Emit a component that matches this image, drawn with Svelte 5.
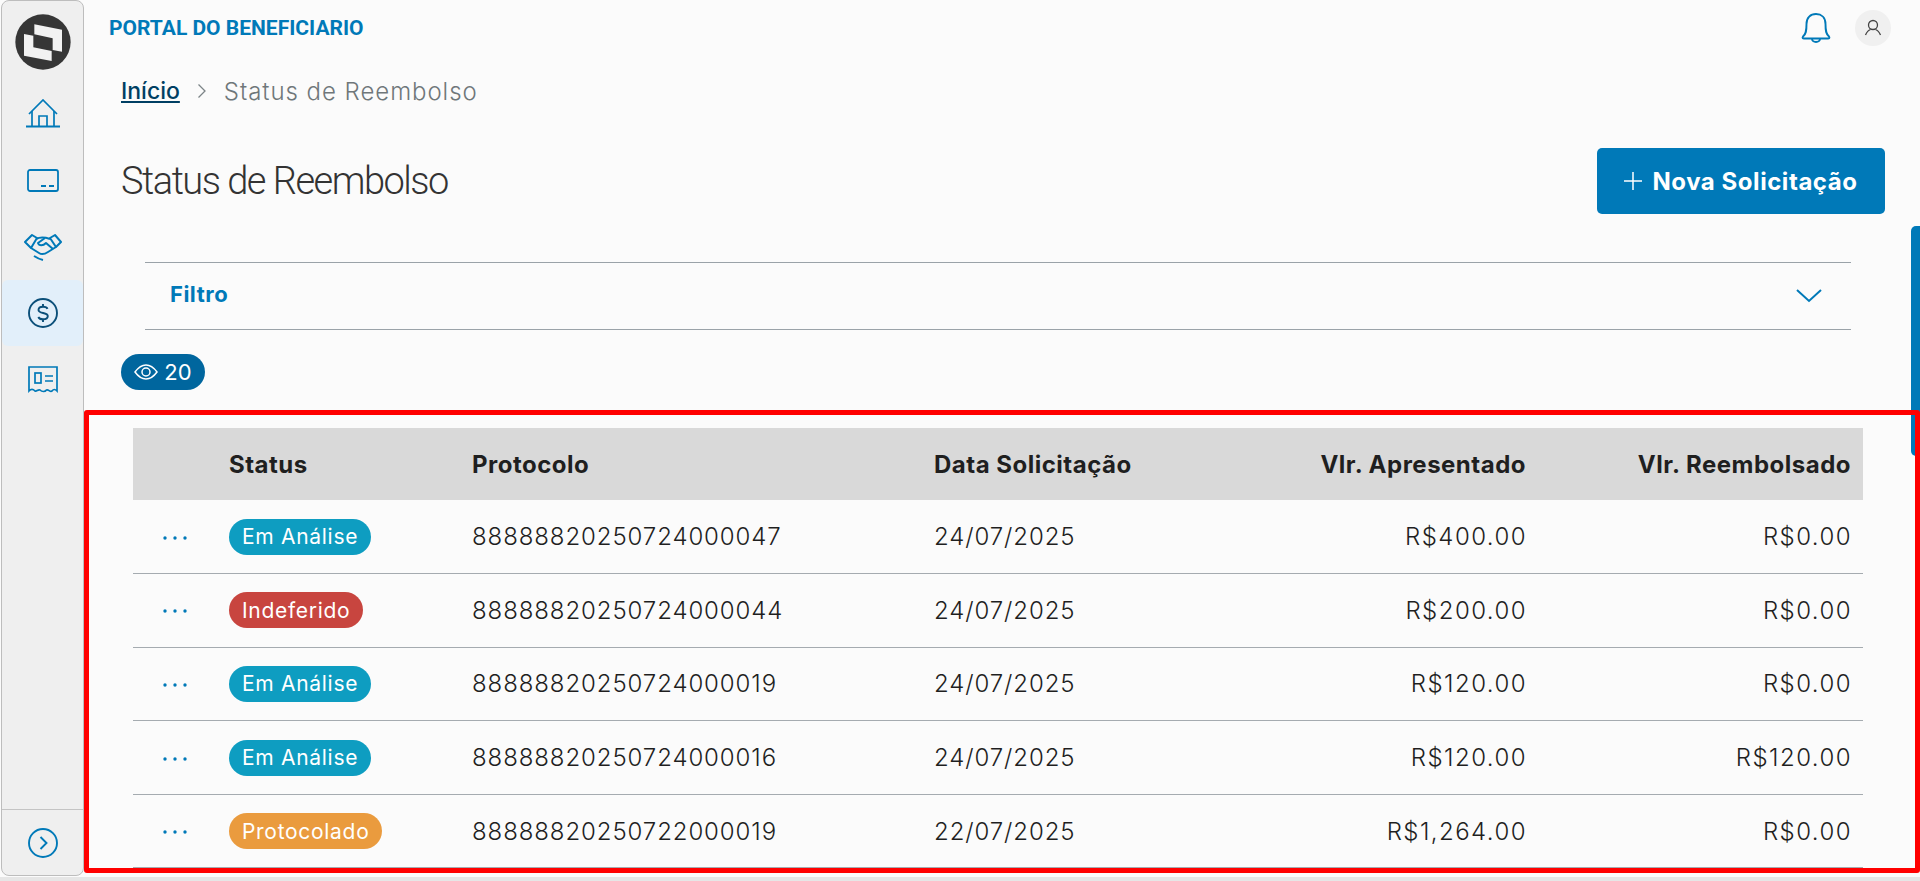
<script>
  const rows = [
    { status: 'Em Análise', kind: 'analise', protocolo: '88888820250724000047', data: '24/07/2025', apresentado: 'R$400.00', reembolsado: 'R$0.00' },
    { status: 'Indeferido', kind: 'indeferido', protocolo: '88888820250724000044', data: '24/07/2025', apresentado: 'R$200.00', reembolsado: 'R$0.00' },
    { status: 'Em Análise', kind: 'analise', protocolo: '88888820250724000019', data: '24/07/2025', apresentado: 'R$120.00', reembolsado: 'R$0.00' },
    { status: 'Em Análise', kind: 'analise', protocolo: '88888820250724000016', data: '24/07/2025', apresentado: 'R$120.00', reembolsado: 'R$120.00' },
    { status: 'Protocolado', kind: 'protocolado', protocolo: '88888820250722000019', data: '22/07/2025', apresentado: 'R$1,264.00', reembolsado: 'R$0.00' }
  ];
</script>

<div class="page">
  <aside class="sidebar">
    <div class="logo">
      <svg width="58" height="58" viewBox="0 0 174 174">
        <circle cx="87" cy="87" r="83" fill="#363636" />
        <path d="M61 34 L144 50 L144 116 L116 111 L116 76 L61 64 Z" fill="#f2f2f2" />
        <path d="M30 63 L58 68 L58 103 L113 114 L113 144 L30 128 Z" fill="#f2f2f2" />
      </svg>
    </div>
    <nav class="nav">
      <div class="nav-item">
        <svg width="36" height="32" viewBox="0 2 36 32" fill="none" stroke="#0079b8" stroke-width="1.7">
          <path d="M4 17 L18 3 L32 17" />
          <path d="M7 14 V29 M29 14 V29" />
          <path d="M14 29 V19 H22 V29" />
          <path d="M1 29.5 H35" stroke-width="2" />
        </svg>
      </div>
      <div class="nav-item">
        <svg width="34" height="26" viewBox="0 0 34 26" fill="none" stroke="#0079b8" stroke-width="1.8">
          <rect x="2" y="2" width="30" height="21" rx="2" />
          <path d="M15 18 H20 M23 18 H28" />
        </svg>
      </div>
      <div class="nav-item">
        <svg width="38" height="28" viewBox="0 0 38 28" fill="none" stroke="#0079b8" stroke-width="2" stroke-linejoin="round">
          <path d="M1 9 L8 2 L13 5 L7 15 Z" />
          <path d="M37 9 L31 2 L26 5 L32 14 Z" />
          <path d="M12 6 C16 4 20 4 26 6" />
          <path d="M7 15 L15 20 C18 22 21 21 24 19 L32 14" />
          <path d="M21 5 L14 10 C15 13 19 13 22 10 L29 16" />
          <path d="M10 23 C13 25 15 26 19 27" />
        </svg>
      </div>
      <div class="nav-item active">
        <svg width="32" height="32" viewBox="0 0 32 32" fill="none" stroke="#0b4f79" stroke-width="1.9">
          <circle cx="16" cy="16" r="14" />
          <path d="M20.500 11.800 C20 10.500 18 9.700 16 9.700 C13 9.700 11.500 11 11.500 13 C11.500 17 20.800 15 20.800 19 C20.800 21 19 22.300 16 22.300 C14 22.300 12 21.500 11.300 20" />
          <path d="M16 7 V9.700 M16 22.300 V25" />
        </svg>
      </div>
      <div class="nav-item">
        <svg width="32" height="28" viewBox="0 0 32 28" fill="none" stroke="#0079b8" stroke-width="1.7">
          <path d="M2 26 V2 H30 V26 C28 24 26.500 24 25 26 C23 27.500 21.500 24 19.500 25 C18 27 15 27 13 25 C11 24 9.500 27 8 26 C6 24 4 24 2 26 Z" />
          <rect x="8" y="8" width="6" height="10" />
          <path d="M18 11 H26 M18 16 H26" />
        </svg>
      </div>
    </nav>
    <div class="expand">
      <svg width="32" height="32" viewBox="0 0 32 32" fill="none" stroke="#0079b8" stroke-width="1.9">
        <circle cx="16" cy="16" r="14" />
        <path d="M13.500 10 L19.500 16 L13.500 22" />
      </svg>
    </div>
  </aside>

  <main class="main">
    <header class="topbar">
      <span class="portal">PORTAL DO BENEFICIARIO</span>
      <div class="topbar-icons">
        <svg width="30" height="32" viewBox="0 0 30 32" fill="none" stroke="#0079b8" stroke-width="1.9">
          <path d="M2 24.500 C5 22 5.500 19 5.500 12 C5.500 5.500 9.500 2 15 2 C20.500 2 24.500 5.500 24.500 12 C24.500 19 25 22 28 24.500 C29 26 28 26.500 27 26.500 H3 C2 26.500 1 26 2 24.500 Z" />
          <path d="M11 27 C11.500 31 18.500 31 19 27" />
        </svg>
        <div class="avatar">
          <svg width="18" height="18" viewBox="0 0 18 18" fill="none" stroke="#444" stroke-width="1.300">
            <circle cx="9" cy="6" r="4.500" />
            <path d="M1.500 16 C3 12.500 5 11 6.500 10.500 M16.500 16 C15 12.500 13 11 11.500 10.500" />
          </svg>
        </div>
      </div>
    </header>

    <div class="crumbs">
      <a class="crumb-link" href="#inicio">Início</a>
      <svg width="10" height="16" viewBox="0 0 10 16" fill="none" stroke="#7c8487" stroke-width="1.300">
        <path d="M1.500 1.500 L8 8 L1.500 14.500" />
      </svg>
      <span class="crumb-current">Status de Reembolso</span>
    </div>

    <div class="title-row">
      <h1>Status de Reembolso</h1>
      <button class="primary">
        <svg width="18" height="18" viewBox="0 0 18 18" stroke="#fff" stroke-width="1.500">
          <path d="M9 0 V18 M0 9 H18" />
        </svg>
        Nova Solicitação
      </button>
    </div>

    <div class="filter">
      <span>Filtro</span>
      <svg width="28" height="16" viewBox="0 0 28 16" fill="none" stroke="#0079b8" stroke-width="2">
        <path d="M2 2 L14 13 L26 2" />
      </svg>
    </div>

    <div class="chip">
      <svg width="24" height="16" viewBox="0 0 24 16" fill="none" stroke="#fff" stroke-width="1.500">
        <path d="M1 8 C5 2.500 9 1 12 1 C15 1 19 2.500 23 8 C19 13.500 15 15 12 15 C9 15 5 13.500 1 8 Z" />
        <circle cx="12" cy="8" r="4" />
      </svg>
      20
    </div>

    <table>
      <thead>
        <tr>
          <th class="col-actions"></th>
          <th class="col-status">Status</th>
          <th class="col-protocolo">Protocolo</th>
          <th class="col-data">Data Solicitação</th>
          <th class="col-vlr num">Vlr. Apresentado</th>
          <th class="col-vlr2 num">Vlr. Reembolsado</th>
        </tr>
      </thead>
      <tbody>
        {#each rows as row}
          <tr>
            <td class="actions">
              <svg width="26" height="6" viewBox="0 0 26 6" fill="#0079b8">
                <circle cx="3" cy="3" r="1.700" />
                <circle cx="13" cy="3" r="1.700" />
                <circle cx="23" cy="3" r="1.700" />
              </svg>
            </td>
            <td><span class="badge {row.kind}">{row.status}</span></td>
            <td>{row.protocolo}</td>
            <td>{row.data}</td>
            <td class="num">{row.apresentado}</td>
            <td class="num">{row.reembolsado}</td>
          </tr>
        {/each}
      </tbody>
    </table>
  </main>

  <div class="scroll-thumb"></div>
  <div class="highlight"></div>
  <div class="hscroll"></div>
</div>

<style>
  :global(body) {
    margin: 0;
    background: #fbfbfb;
    overflow: hidden;
  }
  .page {
    position: relative;
    display: flex;
    width: 1920px;
    height: 881px;
    overflow: hidden;
    background: #fbfbfb;
    font-family: Inter, "Liberation Sans", sans-serif;
    color: #1f1f1f;
  }

  .sidebar {
    flex: none;
    width: 83px;
    height: 876px;
    margin-left: 1px;
    box-sizing: border-box;
    display: flex;
    flex-direction: column;
    background: #efefef;
    border: 1px solid #bdbdbd;
    border-radius: 8px;
  }
  .logo {
    display: flex;
    justify-content: center;
    padding-top: 12px;
    height: 81px;
    box-sizing: border-box;
  }
  .nav {
    flex: 1;
    display: flex;
    flex-direction: column;
  }
  .nav-item {
    height: 66px;
    display: flex;
    align-items: center;
    justify-content: center;
  }
  .nav-item.active {
    background: #e2effa;
    border-radius: 6px;
  }
  .expand {
    height: 64px;
    padding-top: 1px;
    border-top: 1px solid #c4c4c4;
    display: flex;
    align-items: center;
    justify-content: center;
  }

  .main {
    flex: 1;
    min-width: 0;
    display: flex;
    flex-direction: column;
  }
  .topbar {
    height: 56px;
    padding: 0 29px 0 25px;
    display: flex;
    align-items: center;
    justify-content: space-between;
  }
  .portal {
    font-family: Roboto, sans-serif;
    font-weight: 700;
    font-size: 21px;
    color: #0079b8;
  }
  .topbar-icons {
    display: flex;
    align-items: center;
    gap: 24px;
  }
  .avatar {
    width: 36px;
    height: 36px;
    border-radius: 50%;
    background: #f0f0f0;
    display: flex;
    align-items: center;
    justify-content: center;
  }

  .crumbs {
    display: flex;
    align-items: center;
    gap: 17px;
    margin: 20px 0 0 37px;
    height: 30px;
    font-size: 24px;
  }
  .crumb-link {
    color: #003f63;
    font-weight: 500;
    font-size: 23px;
    text-decoration: underline;
  }
  .crumb-current {
    color: #6f777a;
    font-weight: 300;
    letter-spacing: 0.95px;
  }

  .title-row {
    display: flex;
    align-items: center;
    justify-content: space-between;
    margin: 42px 35px 0 37px;
    height: 66px;
  }
  h1 {
    margin: 0;
    font-family: Roboto, sans-serif;
    font-weight: 300;
    font-size: 38px;
    letter-spacing: -1.5px;
    color: #333;
  }
  .primary {
    width: 288px;
    height: 66px;
    border: none;
    border-radius: 5px;
    background: #0079b8;
    color: #fff;
    font-family: inherit;
    font-weight: 700;
    font-size: 24px;
    letter-spacing: 0.55px;
    display: flex;
    align-items: center;
    justify-content: center;
    gap: 10px;
  }

  .filter {
    margin: 48px 69px 0 61px;
    height: 68px;
    box-sizing: border-box;
    border-top: 1px solid #9aa2a8;
    border-bottom: 1px solid #9aa2a8;
    padding: 0 28px 0 25px;
    display: flex;
    align-items: center;
    justify-content: space-between;
    color: #0079b8;
    font-weight: 700;
    font-size: 22px;
    letter-spacing: 0.5px;
  }
  .filter span {
    margin-bottom: 5px;
  }

  .chip {
    align-self: flex-start;
    margin: 24px 0 0 37px;
    width: 84px;
    height: 36px;
    box-sizing: border-box;
    border-radius: 18px;
    background: #00669e;
    color: #fff;
    font-size: 22px;
    display: flex;
    align-items: center;
    justify-content: center;
    gap: 6px;
  }

  table {
    margin: 38px 0 0 49px;
    width: 1730px;
    table-layout: fixed;
    border-collapse: collapse;
    font-size: 24px;
    font-weight: 300;
    letter-spacing: 0.9px;
  }
  th {
    height: 72px;
    padding: 0 12px;
    background: #d9d9d9;
    text-align: left;
    font-weight: 700;
    letter-spacing: 0.5px;
    color: #1f1f1f;
  }
  .col-actions { width: 60px; }
  .col-status { width: 219px; }
  .col-protocolo { width: 438px; }
  .col-data { width: 284px; }
  .col-vlr { width: 284px; }
  td {
    height: 73.6px;
    padding: 0 12px;
    border-bottom: 1px solid #a5abb0;
    box-sizing: border-box;
  }
  td.num {
    padding-right: 11px;
    letter-spacing: 1.45px;
  }
  .num {
    text-align: right;
  }
  .actions {
    text-align: center;
    line-height: 0;
  }
  .badge {
    display: inline-flex;
    align-items: center;
    height: 36px;
    padding: 0 13px;
    border-radius: 18px;
    color: #fff;
    font-size: 21px;
    font-weight: 400;
    letter-spacing: 0.7px;
    vertical-align: middle;
  }
  .analise { background: #0e9dc1; }
  .indeferido { background: #c8453f; }
  .protocolado { background: #ea9b3e; }

  .scroll-thumb {
    position: absolute;
    top: 226px;
    right: 0;
    width: 9px;
    height: 230px;
    background: #0079b8;
    border-radius: 5px 0 0 5px;
  }
  .highlight {
    position: absolute;
    left: 84px;
    top: 410px;
    width: 1836px;
    height: 463px;
    box-sizing: border-box;
    border: 5px solid #ff0000;
    border-radius: 3px;
    pointer-events: none;
  }
  .hscroll {
    position: absolute;
    left: 0;
    right: 0;
    bottom: 0;
    height: 4px;
    background: #e6e6e6;
  }
</style>
